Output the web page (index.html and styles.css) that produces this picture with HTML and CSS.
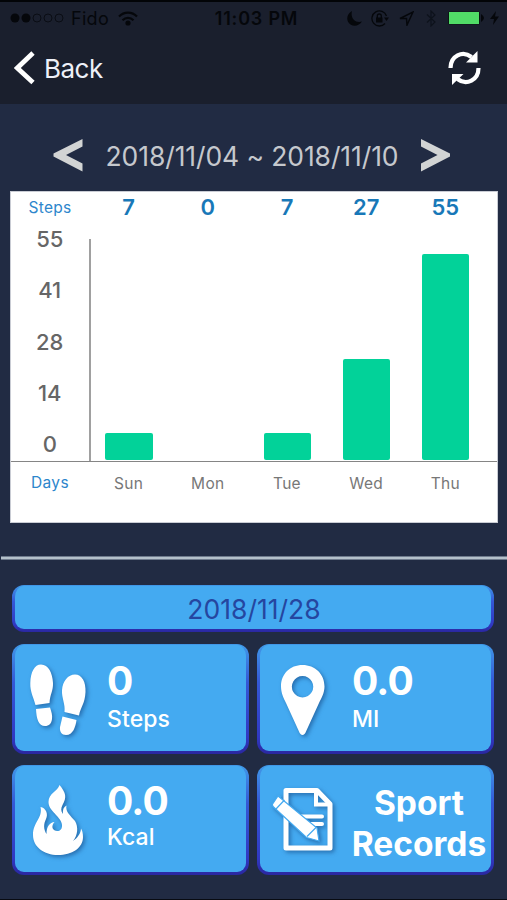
FILE: index.html
```html
<!DOCTYPE html>
<html lang="en">
<head>
  <meta charset="UTF-8">
  <meta name="viewport" content="width=device-width, initial-scale=1.0">
  <title>Steps</title>
  <link rel="stylesheet" href="styles.css">
</head>
<body>

<header class="header">
  <!-- Status bar -->
  <div class="status">
    <div class="status-left">
      <svg class="dots" width="54" height="12" viewBox="0 0 54 12">
        <circle cx="5" cy="6" r="4.5"/>
        <circle cx="16" cy="6" r="4.5"/>
        <g fill="none" stroke="#0a0d14">
          <circle cx="27" cy="6" r="4"/>
          <circle cx="38" cy="6" r="4"/>
          <circle cx="49" cy="6" r="4"/>
        </g>
      </svg>
      <span class="carrier">Fido</span>
      <svg width="20" height="15" viewBox="0 0 20 15" fill="none" stroke="#05070b" stroke-width="2.2">
        <path d="M1 5.6C6 .4 14 .4 19 5.6"/>
        <path d="M4.5 9.2C7.7 6 12.3 6 15.5 9.2"/>
        <circle cx="10" cy="12" r="1.5" fill="#05070b"/>
      </svg>
    </div>
    <div class="clock">11:03 PM</div>
    <div class="status-right">
      <svg width="15" height="15" viewBox="0 0 15 15"><path d="M5 0C-.5 3-1.5 10 3.5 13.5C7.5 16 12.5 14.5 15 10.5C9 12.5 3 8 5 0Z"/></svg>
      <svg width="18" height="17" viewBox="0 0 18 17">
        <path d="M15.5 6A7.5 7.5 0 1 0 14 13.5" fill="none" stroke="#05070b" stroke-width="1.3"/>
        <path d="M13 7.5H18L15.5 11Z"/>
        <path d="M5 7.5H11.5V12.5H5Z"/>
        <path d="M6.3 8V6a2 2 0 0 1 4 0V8" fill="none" stroke="#05070b" stroke-width="1.3"/>
      </svg>
      <svg width="15" height="15" viewBox="0 0 15 15" fill="none" stroke="#05070b" stroke-width="1.5"><path d="M1 7.5L14 1L8 14L7.5 7.5Z"/></svg>
      <svg class="bluetooth" width="10" height="17" viewBox="0 0 10 17" fill="none" stroke="#0d121b" stroke-width="1.2"><path d="M1 4.5L9 12L5 16V1L9 5L1 12.5"/></svg>
      <svg width="38" height="14" viewBox="0 0 38 14">
        <rect x="0" y=".5" width="32" height="13" rx="1.5" fill="#0a1812"/>
        <rect x="1" y="1" width="30" height="12" fill="#51dc67"/>
        <path d="M33 3Q39 7 33 11Z"/>
      </svg>
      <svg class="bolt" width="9" height="14" viewBox="0 0 9 14"><path d="M6 0L0 8H4L3 14L9 5.5H5Z"/></svg>
    </div>
  </div>

  <!-- Navigation -->
  <div class="nav">
    <div class="back">
      <svg width="21" height="34" viewBox="0 0 21 34" fill="none" stroke="#fff" stroke-width="4.8"><path d="M19 2L3.3 17L19 31.5"/></svg>
      <span>Back</span>
    </div>
    <svg class="refresh" width="33" height="34" viewBox="0 0 33 34">
      <path d="M2.5 17C2.5 5 14.5-1 23.5 6" fill="none" stroke="#fff" stroke-width="4.2"/>
      <path d="M29.5 0V11.5H18Z" fill="#fff"/>
      <path d="M30.5 17C30.5 29 18.5 35 9.5 28" fill="none" stroke="#fff" stroke-width="4.2"/>
      <path d="M4 34V23H15.5Z" fill="#fff"/>
    </svg>
  </div>
</header>

<div class="week">
  <svg width="30" height="34" viewBox="0 0 30 34"><path d="M29.5 1V8.5L13 17L29.5 25.5V33.5L.5 18.5V15.5Z"/></svg>
  <span class="range">2018/11/04 ~ 2018/11/10</span>
  <svg width="30" height="34" viewBox="0 0 30 34"><path d="M0 1V8.5L16.5 17L0 25.5V33.5L29 18.5V15.5Z"/></svg>
</div>

<div class="chart">
  <div class="values">
    <span class="caption">Steps</span>
    <b>7</b><b>0</b><b>7</b><b>27</b><b>55</b>
  </div>
  <div class="plot">
    <div class="scale">
      <span>55</span><span>41</span><span>28</span><span>14</span><span>0</span>
    </div>
    <div class="bars">
      <div class="slot"><div class="bar" style="height: 27px"></div></div>
      <div class="slot"></div>
      <div class="slot"><div class="bar" style="height: 27px"></div></div>
      <div class="slot"><div class="bar" style="height: 101px"></div></div>
      <div class="slot"><div class="bar" style="height: 206px"></div></div>
    </div>
  </div>
  <div class="days">
    <span class="caption">Days</span>
    <span>Sun</span><span>Mon</span><span>Tue</span><span>Wed</span><span>Thu</span>
  </div>
</div>

<div class="divider"></div>

<div class="summary">
  <div class="box date">2018/11/28</div>

  <div class="box card">
    <svg class="icon" width="66" height="80" viewBox="24 657 66 80">
      <path d="M41 664.500C48.500 664.500 52.500 673 53 683C53.300 691 50 694 49.500 703L35.500 705C33.500 697 30 692 30.300 683C30.600 672 34.500 664.500 41 664.500Z"/>
      <path d="M36 709L50 707.500C51.500 712 52.500 715 52 719C51.500 723.500 49 726 45 726C38.500 726 36.500 719 36 709Z"/>
      <path d="M75 674.500C82 674.500 86 682 85.500 692C85 704 80.500 707 79 715.500L64.500 712C65.500 704 61.500 698 62 690C62.700 681 68 674.500 75 674.500Z"/>
      <path d="M62.500 716.500L76.500 720C75.500 727 73 735 66 735C61.500 735 59.500 731.500 60 727Z"/>
    </svg>
    <div class="info"><div class="number">0</div><div class="unit">Steps</div></div>
  </div>

  <div class="box card">
    <svg class="icon" width="66" height="80" viewBox="269 657 66 80">
      <path fill-rule="evenodd" d="M302.500 665C315 665 324.500 674 324.500 686.500C324.500 693 321.500 698 319 703L306 731.500C304.500 736 300.500 736 299 731.500L286 703C283.500 698 281 693 281 686.500C281 674 290 665 302.500 665ZM302.500 676A10.700 10.700 0 1 0 302.600 676Z"/>
    </svg>
    <div class="info"><div class="number">0.0</div><div class="unit">MI</div></div>
  </div>

  <div class="box card kcal">
    <svg class="icon" width="66" height="80" viewBox="24 777 66 80">
      <path d="M59.500 785C58 791 48.500 793 48.500 802C48.500 808 53 811 56 815C60 819 63.500 824 61.500 828.500C60 832 54 832 52.500 828C52 825.500 53 823.500 54.500 822C50 822.500 46.500 826 46.500 834C43.500 829 43.500 824 46 819C48.500 814 46 808 40.500 807C43 818 33 822 33 835C33 847 44 855 58 855C72 855 83 848 83 837C83 833 82 830 81 828.500C81 833 77.500 838 73 841C78 835 78.500 827 75 821C71 816 65 812 66.500 805.500C63.500 807 62.500 810 63 814C60.500 811 61 808 62.500 805C67 797 66 793 59.500 785Z"/>
    </svg>
    <div class="info"><div class="number">0.0</div><div class="unit">Kcal</div></div>
  </div>

  <div class="box card records">
    <svg class="icon" width="66" height="80" viewBox="269 779 66 80">
      <path d="M286 791.500H317L330 805V849H286Z" fill="none" stroke="#fff" stroke-width="5" stroke-linejoin="round"/>
      <path d="M316 790V805.500H331" fill="none" stroke="#fff" stroke-width="4"/>
      <path d="M301 817.500H322M310 825H322" stroke="#fff" stroke-width="4" stroke-linecap="round"/>
      <path d="M278 797L317 829L319 842L306.500 838.500L273 807.500Q271.500 805.500 273.500 803.500L278 797Q279 796 281 798Z" stroke="#44aaf1" stroke-width="1.200"/>
      <path d="M276 810L284.500 801M307 837.500L316.500 828" stroke="#44aaf1" stroke-width="1.200"/>
    </svg>
    <div class="title">Sport<br>Records</div>
  </div>
</div>

</body>
</html>
```
FILE: styles.css
```css
* {
  box-sizing: border-box;
}

body {
  margin: 0;
  height: 900px;
  overflow: hidden;
  background: #212b43;
  border-bottom: 1px solid #080b12;
  font-family: Inter, "Liberation Sans", sans-serif;
}

svg {
  display: block;
  flex: none;
}

.header {
  height: 104px;
  background: #1a1f2d;
  border-top: 2px solid #020407;
}

.status {
  display: grid;
  grid-template-columns: 1fr auto 1fr;
  align-items: center;
  height: 32px;
  padding: 0 8px 0 10px;
  color: #05070b;
  fill: #05070b;
  font-size: 18px;
}

.status-left,
.status-right {
  display: flex;
  align-items: center;
}

.carrier {
  margin: 0 9px 0 7px;
  letter-spacing: 0.3px;
}

.clock {
  padding-left: 4px;
  font-weight: 600;
  letter-spacing: 0.8px;
}

.status-right {
  justify-content: flex-end;
  gap: 9.5px;
}

.bluetooth {
  margin: 0 2px 0 3px;
}

.bolt {
  margin-left: -5px;
}

.nav {
  display: flex;
  justify-content: space-between;
  align-items: center;
  height: 68px;
  padding: 0 26px 0 14px;
}

.back {
  display: flex;
  align-items: center;
  gap: 9px;
  color: #eef0f8;
  font-size: 26px;
  letter-spacing: -0.5px;
}

/* Week selector */
.week {
  display: flex;
  justify-content: center;
  align-items: center;
  gap: 22px;
  height: 87px;
  padding: 15px 4px 0 0;
  fill: #d2d4d4;
}

.range {
  width: 294px;
  padding: 1px 0 0 1px;
  color: #c5c8cd;
  font-size: 26.5px;
  letter-spacing: -0.1px;
  text-align: center;
  white-space: nowrap;
}

/* Chart */
.chart {
  width: 488px;
  height: 332px;
  margin-left: 10px;
  background: #fff;
  border: 1px solid #c9ccd4;
}

.values,
.days {
  display: grid;
  grid-template-columns: 78px repeat(5, 79.2px);
  text-align: center;
}

.values {
  height: 47px;
  padding-top: 2px;
  color: #1878b8;
  font-size: 22px;
  line-height: 27px;
}

.values b {
  font-weight: 600;
}

.caption {
  color: #2d86cc;
  font-size: 15.5px;
  letter-spacing: 0.3px;
}

.plot {
  display: flex;
  height: 223px;
  border-bottom: 1.5px solid #858585;
}

.scale {
  display: flex;
  flex-direction: column;
  width: 77.5px;
  margin-top: -12px;
  color: #666;
  font-size: 22px;
  font-weight: 500;
  line-height: 24px;
  text-align: center;
  gap: 27.3px;
}

.bars {
  display: grid;
  grid-template-columns: repeat(5, 79.2px);
  border-left: 2px solid #a0a0a0;
}

.slot {
  display: flex;
  justify-content: center;
  align-items: flex-end;
  padding: 0 2.4px 1px 0;
}

.bar {
  width: 47.5px;
  background: #02d299;
  border-radius: 2px;
}

.days {
  padding-top: 10px;
  color: #777;
  font-size: 15.5px;
  line-height: 24px;
  letter-spacing: 0.3px;
}

.days .caption {
  line-height: 21px;
}

.divider {
  height: 4px;
  margin: 33px 0 25px 1px;
  background: #b4c0ca;
  border: solid #6e7a8c;
  border-width: 1px 0;
}

/* Daily summary */
.summary {
  display: grid;
  grid-template-columns: 237px 237px;
  grid-template-rows: 47px 110px 110px;
  gap: 11.5px 8px;
  padding-left: 12px;
}

.box {
  border: solid transparent;
  border-width: 1px 3px 3px;
  border-radius: 12px;
  background:
    linear-gradient(#44aaf1, #44aaf1) padding-box,
    linear-gradient(#4098e8, #3458d6 35%, #3038c2 85%, #2a27a0) border-box;
}

.date {
  grid-column: 1 / 3;
  padding-left: 2px;
  color: #2546a0;
  font-size: 26.5px;
  line-height: 47px;
  text-align: center;
}

.card {
  display: flex;
  padding: 12px 0 0 9px;
  color: #fff;
}

.icon {
  fill: #fff;
  filter: drop-shadow(2px 2px 2px rgba(20, 70, 130, 0.6));
}

.info {
  padding: 0 0 0 17px;
}

.number {
  font-size: 39px;
  font-weight: 700;
  letter-spacing: -0.8px;
  line-height: 48px;
}

.unit {
  font-size: 23px;
  font-weight: 500;
  letter-spacing: 0.1px;
  line-height: 28px;
}

.kcal {
  padding-top: 11px;
}

.kcal .unit {
  line-height: 25px;
}

.title {
  width: 142px;
  margin: 5px 0 0 13px;
  font-size: 33.5px;
  font-weight: 700;
  line-height: 41px;
  text-align: center;
}
```
